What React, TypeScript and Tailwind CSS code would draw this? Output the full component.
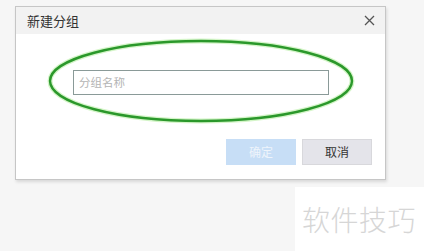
import React from "react";

export default function App() {
  const font = { fontFamily: '"Noto Sans CJK SC", "Liberation Sans", sans-serif' };
  return (
    <div className="relative w-[424px] h-[251px] overflow-hidden bg-[#f6f6f6]" style={font}>
      <div className="pl-[15px] pt-[6px]">
        <div className="w-[371px] h-[174px] bg-white border border-[#c6c6c6] shadow-[1px_2px_3px_rgba(0,0,0,0.12)] flex flex-col">
          <div className="h-[27px] bg-[#f2f2f2] flex items-center justify-between pl-[11px] pr-[10px] shrink-0">
            <span className="text-[13px] text-[#333] leading-none">新建分组</span>
            <svg width="11" height="11" viewBox="0 0 11 11">
              <path d="M1 1 L10 10 M10 1 L1 10" stroke="#555" strokeWidth="1.3" />
            </svg>
          </div>
          <div className="flex-1 flex flex-col">
            <div className="pl-[57px] pt-[36px]">
              <div className="w-[256px] h-[25px] border border-[#8a9a98] flex items-center pl-[5px]">
                <span className="text-[11.5px] text-[#b4b4b4] leading-none">分组名称</span>
              </div>
            </div>
            <div className="mt-auto flex justify-end gap-[6px] pr-[13px] pb-[14px]">
              <div className="w-[70px] h-[26px] bg-[#c7def6] flex items-center justify-center text-[12px] text-[#eef4fb]">确定</div>
              <div className="w-[70px] h-[26px] bg-[#e4e4ea] border border-[#d8d8dc] flex items-center justify-center text-[12px] text-[#333]">取消</div>
            </div>
          </div>
        </div>
      </div>
      <svg className="absolute left-0 top-0 pointer-events-none" width="424" height="251">
        <ellipse cx="201" cy="81" rx="151" ry="40" fill="none" stroke="#d4f5c8" strokeWidth="5" />
        <ellipse cx="201" cy="81" rx="151" ry="40" fill="none" stroke="#2b982b" strokeWidth="2.4" />
      </svg>
      <div className="absolute left-[295px] top-[187px] w-[129px] h-[64px] bg-white flex items-center pl-[7px]">
        <span className="text-[28px] text-[#d6d6d6] leading-none tracking-[0.5px] font-light">软件技巧</span>
      </div>
    </div>
  );
}
